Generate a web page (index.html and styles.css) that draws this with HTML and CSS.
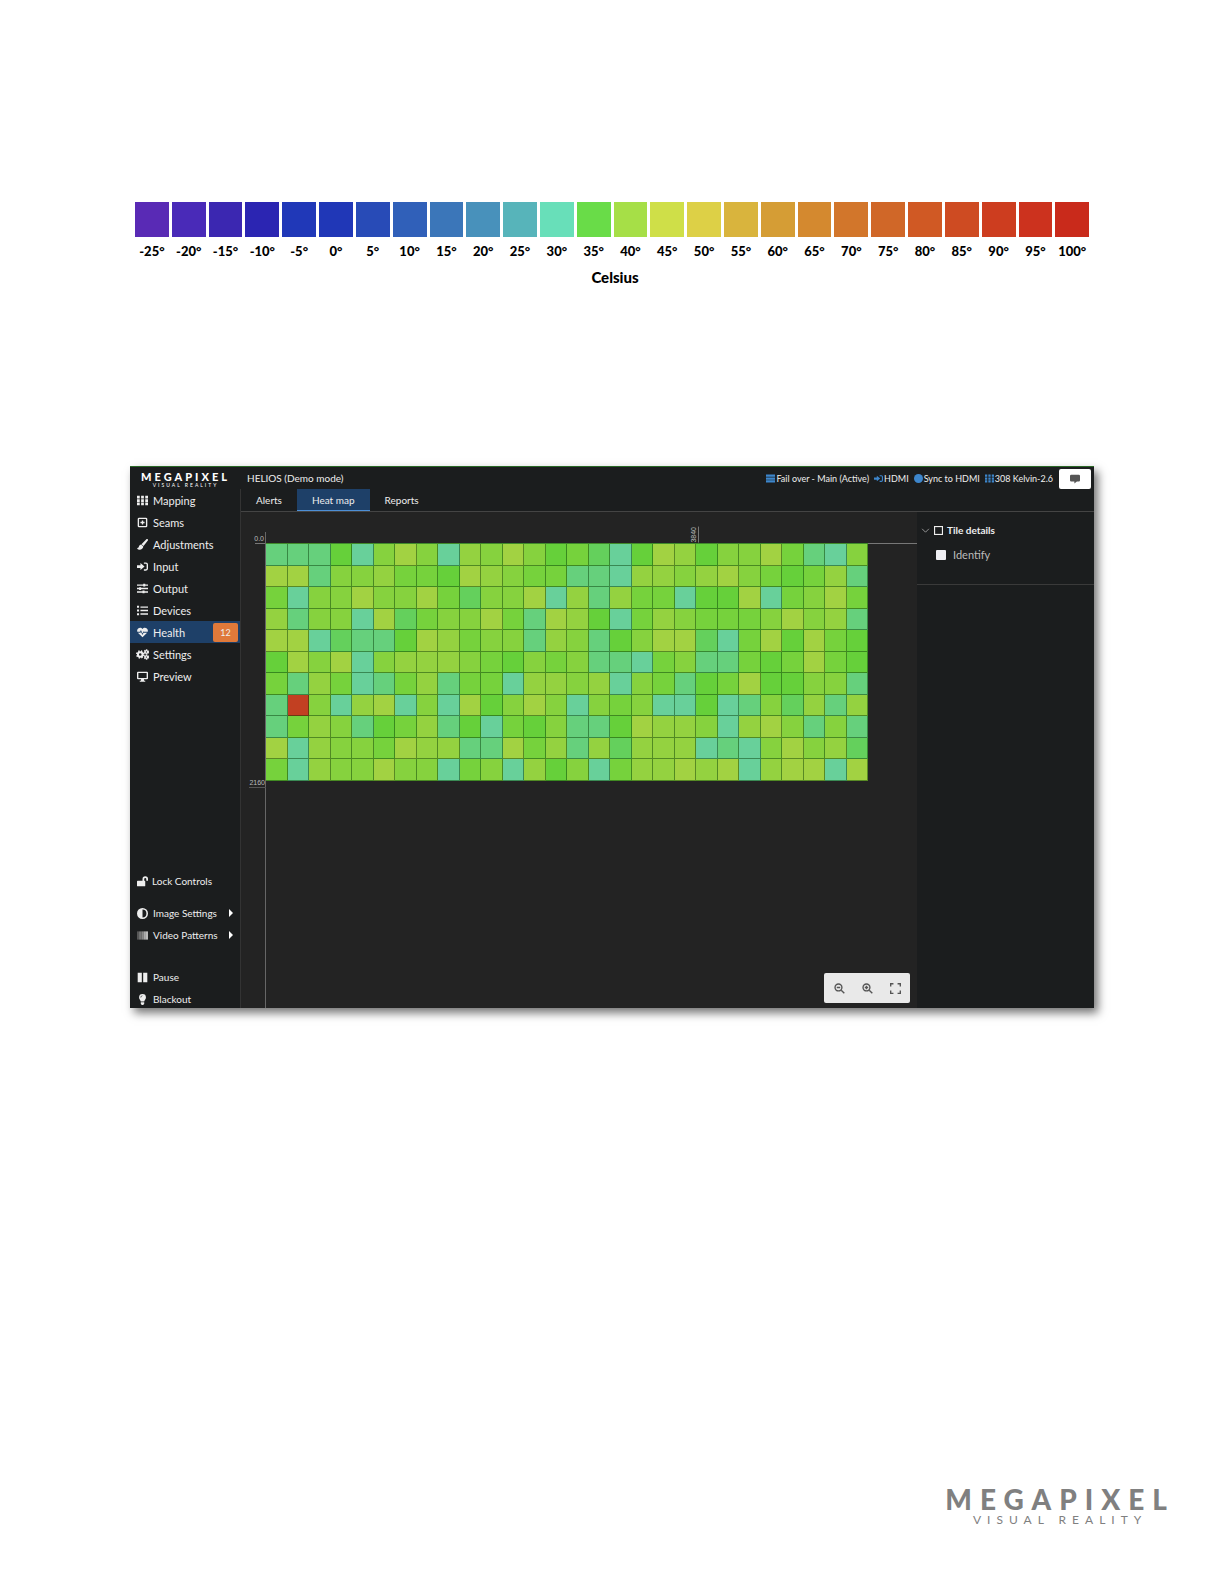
FILE: index.html
```html
<!DOCTYPE html>
<html lang="en">
<head>
  <meta charset="UTF-8" />
  <meta name="viewport" content="width=device-width, initial-scale=1.0"/>
  <title>HELIOS - Heat map</title>
  <link rel="stylesheet" href="styles.css">
</head>
<body>

<section class="legend">
  <div class="scale" id="scale"></div>
  <div class="unit">Celsius</div>
</section>

<main class="app">
  <header class="topbar">
    <div class="logo logo-small">
      <span class="logo-name">MEGAPIXEL</span>
      <span class="logo-sub">VISUAL REALITY</span>
    </div>
    <h1 class="device">HELIOS (Demo mode)</h1>
    <div class="status">
      <span class="status-item">
        <svg viewBox="0 0 16 16"><path d="M0 1h16v4H0zM0 6h16v4H0zM0 11h16v4H0z"/></svg>Fail over - Main (Active)
      </span>
      <span class="status-item">
        <svg viewBox="0 0 16 16"><path d="M0 6h5V3l6 5-6 5v-3H0zM10 2h3a3 3 0 0 1 3 3v6a3 3 0 0 1-3 3h-3v-2h3a1 1 0 0 0 1-1V5a1 1 0 0 0-1-1h-3z"/></svg>HDMI
      </span>
      <span class="status-item">
        <svg viewBox="0 0 16 16"><circle cx="8" cy="8" r="8"/></svg>Sync to HDMI
      </span>
      <span class="status-item">
        <svg viewBox="0 0 16 16"><path d="M0 1h4v4H0zM6 1h4v4H6zM12 1h4v4h-4zM0 6h4v4H0zM6 6h4v4H6zM12 6h4v4h-4zM0 11h4v4H0zM6 11h4v4H6zM12 11h4v4h-4z"/></svg>308 Kelvin-2.6
      </span>
    </div>
    <button class="comment" aria-label="Comments">
      <svg viewBox="0 0 16 16"><path d="M2 1h12a2 2 0 0 1 2 2v7a2 2 0 0 1-2 2h-3l-4 3v-3H2a2 2 0 0 1-2-2V3a2 2 0 0 1 2-2z"/></svg>
    </button>
  </header>

  <div class="body">
    <nav class="sidebar">
      <a class="item" href="#">
        <svg viewBox="0 0 16 16"><path d="M0 1h4v4H0zM6 1h4v4H6zM12 1h4v4h-4zM0 6h4v4H0zM6 6h4v4H6zM12 6h4v4h-4zM0 11h4v4H0zM6 11h4v4H6zM12 11h4v4h-4z"/></svg>Mapping
      </a>
      <a class="item" href="#">
        <svg class="line" viewBox="0 0 16 16"><rect x="2" y="2" width="12" height="12" rx="1"/><path d="M8 5v6M5 8h6"/></svg>Seams
      </a>
      <a class="item" href="#">
        <svg viewBox="0 0 16 16"><path d="M15.600.5c.6.7.4 1.300-.1 2L9.500 10 6.500 7.500 13.300.8c.8-.8 1.800-.8 2.300-.3zM6 8l3.200 2.900C9 14 6 16 3 15.500 1.500 15.300.5 14.300 0 13c2 .3 2.400-.5 2.800-2C3.200 9.500 4.300 8 6 8z"/></svg>Adjustments
      </a>
      <a class="item" href="#">
        <svg viewBox="0 0 16 16"><path d="M0 6h5V3l6 5-6 5v-3H0zM10 2h3a3 3 0 0 1 3 3v6a3 3 0 0 1-3 3h-3v-2h3a1 1 0 0 0 1-1V5a1 1 0 0 0-1-1h-3z"/></svg>Input
      </a>
      <a class="item" href="#">
        <svg viewBox="0 0 16 16"><path d="M0 2h9V1h3v1h4v2h-4v1H9V4H0zM0 7h3V6h3v1h10v2H6v1H3V9H0zM0 12h8v-1h3v1h5v2h-5v1H8v-1H0z"/></svg>Output
      </a>
      <a class="item" href="#">
        <svg viewBox="0 0 16 16"><path d="M0 1h3v3H0zM5 2h11v2H5zM0 6.500h3v3H0zM5 7h11v2H5zM0 12h3v3H0zM5 12h11v2H5z"/></svg>Devices
      </a>
      <a class="item active" href="#">
        <svg viewBox="0 0 16 16"><path d="M8 3C6.500.5 3.500.5 1.700 2 .2 3.400-.2 5.300.5 7h4l1.200-2.700 2.300 5 1.500-3L10 7h5.500c.7-1.700.3-3.600-1.200-5C12.500.5 9.500.5 8 3zM1.300 8.200L8 15l6.700-6.800H9.500L8 11.500 5.700 7l-.5 1.200z"/></svg>Health
        <span class="badge">12</span>
      </a>
      <a class="item" href="#">
        <svg class="gears" viewBox="0 0 20 16"><circle cx="6.500" cy="8" r="3.500"/><circle class="teeth" cx="6.500" cy="8" r="5"/><circle class="small" cx="16" cy="4" r="2"/><circle class="small" cx="16" cy="12" r="2"/><circle class="small-teeth" cx="16" cy="4" r="3"/><circle class="small-teeth" cx="16" cy="12" r="3"/></svg>Settings
      </a>
      <a class="item" href="#">
        <svg viewBox="0 0 16 16"><path fill-rule="evenodd" d="M1.500 1h13A1.500 1.500 0 0 1 16 2.500v8a1.500 1.500 0 0 1-1.500 1.500H10l.5 2H12v1.500H4V14h1.500l.5-2H1.500A1.500 1.500 0 0 1 0 10.500v-8A1.500 1.500 0 0 1 1.500 1zM2 3v7h12V3z"/></svg>Preview
      </a>

      <div class="controls">
        <button class="item lock">
          <svg viewBox="0 0 16 16"><path d="M1 7h7V4.500a4 4 0 0 1 8 0V7h-2.500V4.500a1.500 1.500 0 0 0-3 0V7h.5a1 1 0 0 1 1 1v6a1 1 0 0 1-1 1H1a1 1 0 0 1-1-1V8a1 1 0 0 1 1-1z"/></svg>Lock Controls
        </button>
        <button class="item">
          <svg viewBox="0 0 16 16"><path fill-rule="evenodd" d="M8 0a8 8 0 1 1 0 16A8 8 0 0 1 8 0zM8 2.300v11.400A5.700 5.700 0 0 0 8 2.300z"/></svg>Image Settings
          <span class="caret"></span>
        </button>
        <button class="item patterns">
          <svg viewBox="0 0 16 16"><path fill="#555" d="M0 2h3v12H0z"/><path fill="#777" d="M3 2h4v12H3z"/><path fill="#888" d="M7 2h3v12H7z"/><path fill="#aaa" d="M10 2h3v12h-3z"/><path fill="#bbb" d="M13 2h3v12h-3z"/></svg>Video Patterns
          <span class="caret"></span>
        </button>
        <button class="item">
          <svg viewBox="0 0 16 16"><path d="M1 1h6v14H1zM9 1h6v14H9z"/></svg>Pause
        </button>
        <button class="item">
          <svg viewBox="0 0 16 16"><path fill-rule="evenodd" d="M8 0a5 5 0 0 1 5 5c0 2.500-2 3.500-2.500 6h-5C5 8.500 3 7.500 3 5a5 5 0 0 1 5-5zM5 5h1a2 2 0 0 1 2-2V2a3 3 0 0 0-3 3zM5.500 12h5v2L9 16H7l-1.500-2z"/></svg>Blackout
        </button>
      </div>
    </nav>

    <div class="content">
      <div class="tabs">
        <button class="tab">Alerts</button>
        <button class="tab selected">Heat map</button>
        <button class="tab">Reports</button>
      </div>
      <div class="work">
        <div class="map">
          <div class="axis-x"></div>
          <div class="axis-y"></div>
          <div class="plot">
            <div class="heat" id="heat"></div>
            <span class="mark origin">0.0</span>
            <span class="mark right">3840</span>
            <span class="mark bottom">2160</span>
          </div>
          <div class="zoom">
            <button aria-label="Zoom out"><svg viewBox="0 0 16 16"><circle cx="6.500" cy="6.500" r="5"/><path d="M10.500 10.500L15 15M4 6.500h5"/></svg></button>
            <button aria-label="Zoom in"><svg viewBox="0 0 16 16"><circle cx="6.500" cy="6.500" r="5"/><path d="M10.500 10.500L15 15M4 6.500h5M6.500 4v5"/></svg></button>
            <button aria-label="Fit to screen"><svg viewBox="0 0 16 16"><path d="M1 5V1h4M11 1h4v4M15 11v4h-4M5 15H1v-4"/></svg></button>
          </div>
        </div>
        <aside class="details">
          <button class="details-title">
            <svg class="chevron" viewBox="0 0 16 16"><path d="M2 5l6 6 6-6"/></svg>
            <svg viewBox="0 0 16 16"><rect x="1" y="1" width="14" height="14"/></svg>
            Tile details
          </button>
          <label class="identify"><input type="checkbox">Identify</label>
        </aside>
      </div>
    </div>
  </div>
</main>

<footer class="footer">
  <div class="logo">
    <span class="logo-name">MEGAPIXEL</span>
    <span class="logo-sub">VISUAL REALITY</span>
  </div>
</footer>

<script>
  const colors = [
    "#592ab5", "#492ab8", "#3b27b1", "#2b25b2", "#2038b8", "#2037b7", "#284bb7",
    "#3060b9", "#3b76b9", "#4891bb", "#57b4ba", "#68dfb9", "#69dc48", "#a6df47",
    "#cfdf48", "#ddd046", "#d9b43d", "#d59d35", "#d4892f", "#d2762b", "#d06728",
    "#d05924", "#ce4b22", "#cd3d1f", "#cc321e", "#c92a1b"
  ];

  // Legend, five degrees per step
  const scale = document.getElementById("scale");
  colors.forEach((color, i) => {
    const step = document.createElement("div");
    step.className = "step";
    const swatch = document.createElement("div");
    swatch.className = "swatch";
    swatch.style.backgroundColor = color;
    step.append(swatch, `${-25 + i * 5}°`);
    scale.appendChild(step);
  });

  // One letter per tile: a is the coolest, g the warmest, r is over the limit
  const rows = [
    "tttcaegeafegecduacgfceegdtae",
    "ggteefddcgfeddttaffefgedcdft",
    "daeegeegdueegaftfddaccgadegd",
    "fteeagudeegdtgfcadfedddegeft",
    "ggauttcgfdeetfetcegguadgcgdc",
    "cgegaefffedcedettadettdcdgdc",
    "dtfdatdftddaffefaedtcdgcceet",
    "treafgaeagcegeaedeaacateuftf",
    "tdfetcdftcadcettcgffeafgetet",
    "gafeedgffttgdftfufffataegefu",
    "dafeegeeadeafceadffgfgafggag"
  ];
  const heat = document.getElementById("heat");
  rows.join("").split("").forEach(level => {
    const tile = document.createElement("div");
    tile.className = `cell ${level}`;
    heat.appendChild(tile);
  });
</script>

</body>
</html>
```
FILE: styles.css
```css
* {
  box-sizing: border-box;
}

body {
  display: flex;
  flex-direction: column;
  min-height: 100vh;
  margin: 0;
  padding: 202px 130px 57px;
  background-color: #fff;
  color: #000;
  font-family: Lato, sans-serif;
}

button {
  margin: 0;
  padding: 0;
  border: none;
  background: none;
  color: inherit;
  font: inherit;
  cursor: pointer;
}

svg {
  flex: none;
  fill: currentColor;
}

/* Legend */
.legend {
  padding: 0 5px;
  margin-bottom: 179px;
  text-align: center;
  font-weight: 900;
}

.scale {
  display: flex;
  gap: 3px;
}

.step {
  flex: 1;
  font-size: 13px;
  line-height: 28px;
  white-space: nowrap;
}

.swatch {
  height: 35px;
}

.unit {
  padding: 2px 0 0 6px;
  font-size: 15px;
  line-height: 20px;
}

/* Application window */
.app {
  overflow: hidden;
  border-top: 1px solid #2a6826;
  background-color: #1b1d1e;
  box-shadow: 4px 5px 9px rgba(0, 0, 0, 0.55);
  color: #eee;
  font-size: 11px;
}

.topbar {
  display: flex;
  align-items: center;
  height: 22px;
}

.logo {
  display: flex;
  flex-direction: column;
  align-items: center;
}

.logo-name {
  font-size: 28px;
  font-weight: 900;
  line-height: 28px;
  letter-spacing: 8px;
}

.logo-sub {
  font-size: 12px;
  font-weight: 400;
  line-height: 14px;
  letter-spacing: 6px;
}

.logo-small {
  flex: none;
  width: 111px;
  margin-right: 6px;
  padding-top: 3px;
  color: #fff;
}

.logo-small .logo-name {
  font-size: 11px;
  line-height: 11px;
  letter-spacing: 3px;
}

.logo-small .logo-sub {
  font-size: 5px;
  line-height: 7px;
  letter-spacing: 2px;
}

.device {
  margin: 0;
  font-size: 10px;
  font-weight: 400;
  line-height: 24px;
}

.status {
  display: flex;
  gap: 5px;
  margin-left: auto;
  font-size: 9px;
  white-space: nowrap;
}

.status-item {
  display: flex;
  align-items: center;
  gap: 1px;
}

.status svg {
  width: 9px;
  height: 9px;
  color: #3d86cc;
}

.comment {
  display: flex;
  align-items: center;
  justify-content: center;
  width: 32px;
  height: 20px;
  margin: 2px 3px 0 6px;
  border-radius: 2px;
  background-color: #fff;
  color: #555;
}

.comment svg {
  width: 10px;
  height: 10px;
}

.body {
  display: flex;
}

.sidebar {
  display: flex;
  flex: none;
  flex-direction: column;
  width: 111px;
  border-right: 1px solid #333;
}

.item {
  display: flex;
  flex: none;
  align-items: center;
  gap: 5px;
  width: 100%;
  height: 22px;
  padding: 0 2px 0 7px;
  color: #eee;
  text-align: left;
  text-decoration: none;
  white-space: nowrap;
}

.item svg {
  width: 11px;
  height: 11px;
}

.item .line {
  fill: none;
  stroke: currentColor;
  stroke-width: 2;
}

.item .gears {
  width: 13px;
  margin: 0 -1px;
  fill: none;
  stroke: currentColor;
  stroke-width: 3;
}

.gears .teeth {
  stroke-width: 3;
  stroke-dasharray: 2 2;
}

.gears .small {
  stroke-width: 2;
}

.gears .small-teeth {
  stroke-width: 2;
  stroke-dasharray: 2 1;
}

.active {
  background-color: #1e4068;
}

.badge {
  width: 25px;
  margin-left: auto;
  border-radius: 2px;
  background-color: #df793a;
  font-size: 9px;
  line-height: 19px;
  text-align: center;
}

.caret {
  margin: 0 5px 0 auto;
  border: solid transparent;
  border-width: 4px 0 4px 4px;
  border-left-color: #fff;
}

.controls {
  margin-top: auto;
  margin-bottom: -2px;
  font-size: 10px;
}

.lock {
  gap: 4px;
  margin-bottom: 10px;
}

.patterns {
  margin-bottom: 20px;
}

.content {
  display: flex;
  flex: 1;
  flex-direction: column;
  min-width: 0;
}

.tabs {
  display: flex;
  border-bottom: 1px solid #444;
  font-size: 10px;
}

.tab {
  height: 22px;
  padding: 0 15px 1px;
}

.selected {
  padding-bottom: 0;
  background-color: #1e4068;
  border-bottom: 1px solid #4d8fd6;
}

.work {
  display: flex;
  flex: 1;
}

/* Heat map */
.map {
  position: relative;
  flex: 1;
  min-width: 0;
  min-height: 496px;
  padding: 31px 49px 60px 25px;
  background-color: #232323;
}

.plot {
  position: relative;
}

.heat {
  display: grid;
  grid-template-columns: repeat(28, 1fr);
  border-top: 1px solid #3f8a2a;
}

.cell {
  aspect-ratio: 1;
  border-right: 1px solid rgba(0, 50, 0, 0.45);
  border-bottom: 1px solid rgba(0, 50, 0, 0.45);
}

.a { background-color: #68d09a; }
.t { background-color: #66d07c; }
.u { background-color: #64d05c; }
.c { background-color: #66d03a; }
.d { background-color: #76d23c; }
.e { background-color: #86d23e; }
.f { background-color: #94d240; }
.g { background-color: #a2d242; }
.r { background-color: #c24022; }

.axis-x {
  position: absolute;
  top: 31px;
  left: 14px;
  right: 0;
  border-top: 1px solid #777;
}

.axis-y {
  position: absolute;
  top: 20px;
  bottom: 0;
  left: 24px;
  border-left: 1px solid #666;
}

.mark {
  position: absolute;
  color: #bbb;
  font-family: "Liberation Sans", sans-serif;
  font-size: 7px;
  line-height: 8px;
}

.origin {
  right: 100%;
  bottom: 100%;
  padding-right: 2px;
}

.right {
  right: 28%;
  bottom: 100%;
  border-left: 1px solid #777;
  writing-mode: vertical-rl;
  rotate: 180deg;
}

.bottom {
  right: 100%;
  top: 100%;
  margin-top: -2px;
  padding-right: 1px;
  border-bottom: 1px solid #555;
}

.zoom {
  position: absolute;
  right: 7px;
  bottom: 5px;
  display: flex;
  padding: 0 1px;
  border-radius: 2px;
  background-color: #e9e9e9;
  color: #555;
}

.zoom button {
  display: flex;
  align-items: center;
  justify-content: center;
  width: 28px;
  height: 30px;
}

.zoom svg {
  width: 11px;
  height: 11px;
  fill: none;
  stroke: currentColor;
  stroke-width: 2;
}

/* Tile details */
.details {
  flex: none;
  width: 177px;
}

.details-title {
  display: flex;
  align-items: center;
  gap: 4px;
  padding: 10px 4px 0;
  font-size: 10px;
  font-weight: 700;
  line-height: 16px;
}

.details-title svg {
  width: 9px;
  height: 9px;
  fill: none;
  stroke: currentColor;
  stroke-width: 2;
}

.details-title .chevron {
  stroke-width: 1;
}

.identify {
  display: flex;
  align-items: center;
  gap: 7px;
  padding: 9px 19px 21px;
  border-bottom: 1px solid #3a3a3a;
  color: #bbb;
  line-height: 16px;
}

.identify input {
  appearance: none;
  width: 10px;
  height: 10px;
  margin: 0;
  border-radius: 1px;
  background-color: #f0f0f4;
}

.footer {
  display: flex;
  justify-content: flex-end;
  margin-top: auto;
  margin-right: -81px;
  color: #808080;
}
```
